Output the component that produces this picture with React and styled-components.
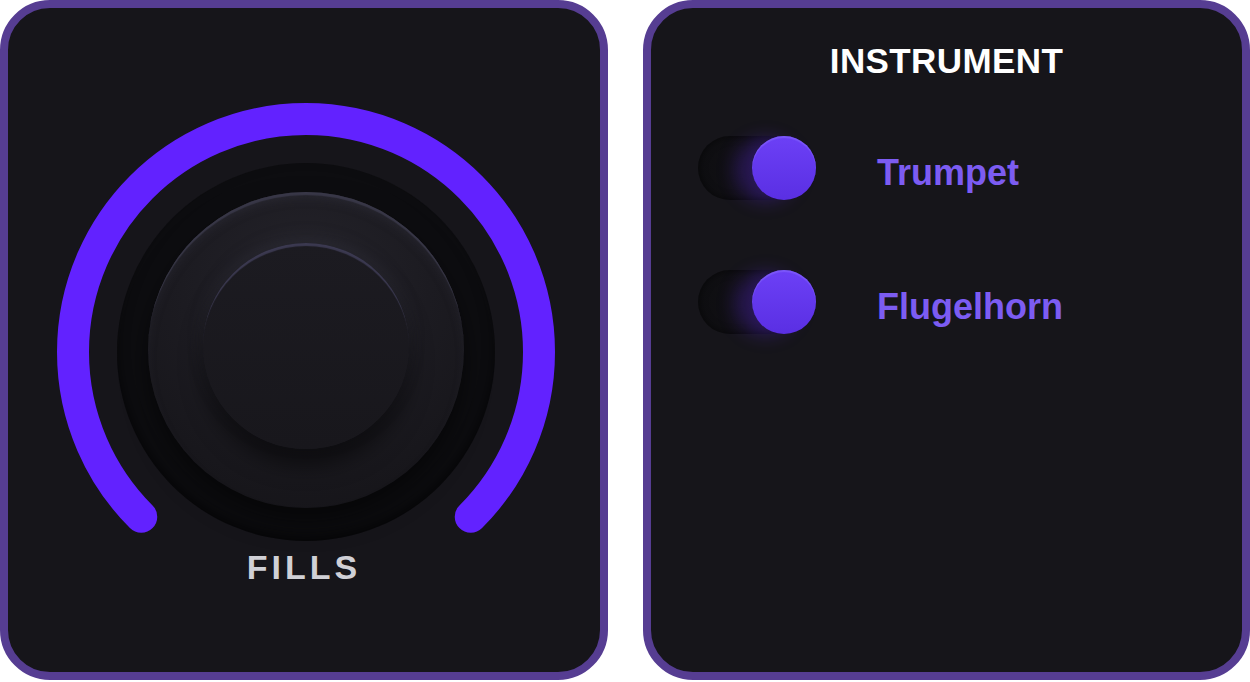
import React from "react"
import styled, { createGlobalStyle } from "styled-components"

const colors = {
  border: "#563d92",
  panel: "#16151a",
  accent: "#6222ff",
  label: "#7c5cf2",
  well: "#0d0d10",
}

const GlobalStyle = createGlobalStyle`
  html, body {
    margin: 0;
    padding: 0;
    background: #ffffff;
  }
  body {
    font-family: "Liberation Sans", Arial, sans-serif;
  }
`

const instruments = [
  { name: "Trumpet", on: true },
  { name: "Flugelhorn", on: true },
]

const App = () => {
  return (
    <>
      <GlobalStyle />
      <Page>
        <Panel>
          <KnobWrap>
            <ArcSvg viewBox="0 0 500 500" width="500" height="500">
              <path
                d="M 85.25 414.75 A 233 233 0 1 1 414.75 414.75"
                fill="none"
                stroke={colors.accent}
                strokeWidth="32"
                strokeLinecap="round"
              />
            </ArcSvg>
            <Well>
              <Body>
                <Cap />
              </Body>
            </Well>
          </KnobWrap>
          <KnobLabel>FILLS</KnobLabel>
        </Panel>
        <Panel $right>
          <Title>INSTRUMENT</Title>
          <List>
            {instruments.map((item) => (
              <Row key={item.name}>
                <Toggle $on={item.on}>
                  <Thumb />
                </Toggle>
                <RowLabel>{item.name}</RowLabel>
              </Row>
            ))}
          </List>
        </Panel>
      </Page>
    </>
  )
}

const Page = styled.div`
  display: flex;
  gap: 35px;
  width: 1250px;
  height: 682px;
  box-sizing: border-box;
`

const Panel = styled.section`
  width: ${(p) => (p.$right ? "607px" : "608px")};
  height: 680px;
  box-sizing: border-box;
  border: 8px solid ${colors.border};
  border-radius: 50px;
  background: ${colors.panel};
  display: flex;
  flex-direction: column;
  align-items: ${(p) => (p.$right ? "stretch" : "center")};
  padding-top: ${(p) => (p.$right ? "35px" : "94px")};
`

const KnobWrap = styled.div`
  position: relative;
  width: 500px;
  height: 440px;
  display: flex;
  justify-content: center;
  margin-left: 4px;
`

const ArcSvg = styled.svg`
  position: absolute;
  top: 0;
  left: 0;
`

const Well = styled.div`
  margin-top: 61px;
  width: 378px;
  height: 378px;
  border-radius: 50%;
  background: ${colors.well};
  display: flex;
  align-items: center;
  justify-content: center;
  box-shadow: inset 0 -6px 12px rgba(0, 0, 0, 0.5);
`

const Body = styled.div`
  width: 316px;
  height: 316px;
  margin-top: -4px;
  border-radius: 50%;
  background: radial-gradient(circle at 50% 28%, #24232a 0%, #1c1b21 45%, #141317 100%);
  box-shadow:
    inset 0 4px 1px -1px #383747,
    inset 0 8px 12px -4px rgba(70, 68, 85, 0.35),
    0 14px 26px rgba(0, 0, 0, 0.55);
  display: flex;
  align-items: center;
  justify-content: center;
`

const Cap = styled.div`
  width: 206px;
  height: 206px;
  margin-top: -8px;
  border-radius: 50%;
  background: linear-gradient(180deg, #1c1b21 0%, #18171c 100%);
  box-shadow:
    inset 0 4px 1px -1px #3b3950,
    0 16px 22px rgba(0, 0, 0, 0.5),
    0 -6px 16px rgba(60, 58, 72, 0.3);
`

const KnobLabel = styled.div`
  margin-top: 8px;
  font-size: 34px;
  line-height: 1;
  font-weight: 700;
  letter-spacing: 4px;
  color: #d0d0d6;
`

const Title = styled.h2`
  margin: 0;
  text-align: center;
  font-size: 35px;
  line-height: 1;
  font-weight: 700;
  letter-spacing: 0.4px;
  color: #ffffff;
`

const List = styled.div`
  display: flex;
  flex-direction: column;
  gap: 70px;
  margin-top: 58px;
  padding-left: 47px;
`

const Row = styled.div`
  display: flex;
  align-items: center;
  height: 64px;
`

const Toggle = styled.div`
  width: 118px;
  height: 64px;
  border-radius: 32px;
  background: linear-gradient(90deg, #0e0e11 0%, #111014 40%, #1e1638 78%);
  display: flex;
  justify-content: ${(p) => (p.$on ? "flex-end" : "flex-start")};
  box-shadow: inset 0 0 8px rgba(0, 0, 0, 0.6);
`

const Thumb = styled.div`
  width: 64px;
  height: 64px;
  border-radius: 50%;
  background: linear-gradient(180deg, #6c40f6 0%, #5a2fe3 100%);
  box-shadow:
    inset 0 2px 1px rgba(140, 110, 255, 0.5),
    -18px 2px 18px rgba(90, 40, 220, 0.3);
`

const RowLabel = styled.span`
  margin-left: 61px;
  padding-top: 10px;
  font-size: 36px;
  line-height: 1;
  font-weight: 700;
  color: ${colors.label};
`

export default App
